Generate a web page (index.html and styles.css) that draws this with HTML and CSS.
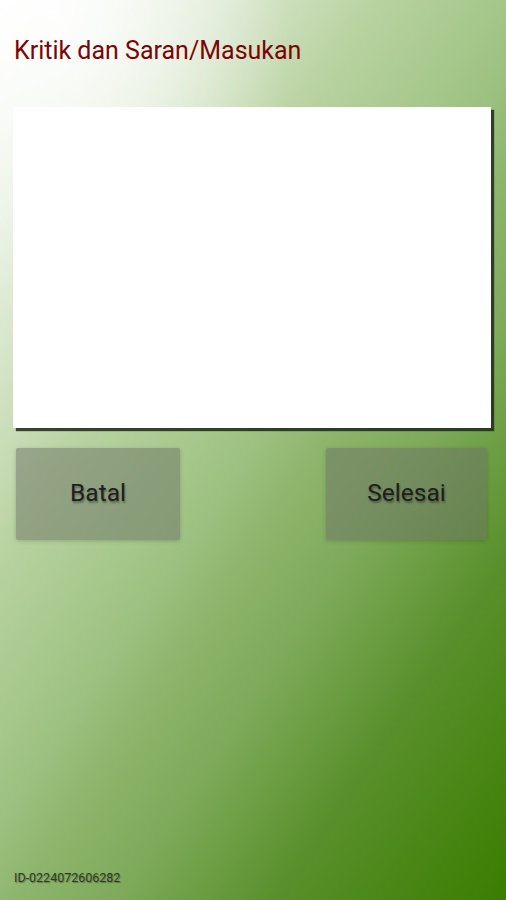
FILE: index.html
```html
<!DOCTYPE html>
<html lang="id">
<head>
<meta charset="utf-8">
<title>Kritik dan Saran/Masukan</title>
<link rel="stylesheet" href="styles.css">
</head>
<body>
<div class="screen">
  <h1 class="title">Kritik dan Saran/Masukan</h1>
  <div class="input-box"></div>
  <div class="actions">
    <button class="btn">Batal</button>
    <button class="btn btn-done">Selesai</button>
  </div>
  <div class="spacer"></div>
  <div class="device-id">ID-0224072606282</div>
</div>
</body>
</html>
```
FILE: styles.css
```css
html, body {
  margin: 0;
  padding: 0;
  height: 100%;
}
body {
  font-family: Roboto, "Noto Sans", "Liberation Sans", sans-serif;
}
.screen {
  box-sizing: border-box;
  width: 506px;
  height: 900px;
  display: flex;
  flex-direction: column;
  padding: 36px 0 0 0;
  background:
    radial-gradient(ellipse 230px 300px at 60px 20px, rgba(255, 255, 255, 0.85) 0%, rgba(255, 255, 255, 0) 100%),
    linear-gradient(124deg, #ffffff 0%, #dbe8d0 20%, #b8d2a0 34%, #a3c688 46%, #9cc080 50%, #8db56c 56%, #7eaa5a 65%, #5a902c 79%, #3a7d00 100%);
}
.title {
  margin: 0 0 0 14px;
  font-size: 25px;
  font-weight: 400;
  line-height: 30px;
  color: #7b0505;
}
.input-box {
  margin: 41px 15px 0 13px;
  height: 321px;
  background: #ffffff;
  box-shadow: 3px 3px 1px rgba(30, 40, 25, 0.85);
}
.actions {
  display: flex;
  justify-content: space-between;
  margin: 20px 19px 0 16px;
}
.btn {
  width: 164px;
  height: 92px;
  border: none;
  border-radius: 2px;
  background: rgba(108, 114, 102, 0.5);
  box-shadow: 0 1px 4px rgba(0, 0, 0, 0.18);
  font-family: Roboto, "Noto Sans", "Liberation Sans", sans-serif;
  font-size: 24.5px;
  color: #1e1e1e;
  text-shadow: 1px 2px 2px rgba(0, 0, 0, 0.35);
  padding: 0 0 4px 0;
}
.btn-done {
  width: 161px;
}
.spacer {
  flex: 1;
}
.device-id {
  margin: 0 0 14px 14px;
  font-size: 12.5px;
  line-height: 16px;
  color: #2f3a28;
  text-shadow: 1px 1px 1px rgba(0, 0, 0, 0.3);
}
```
